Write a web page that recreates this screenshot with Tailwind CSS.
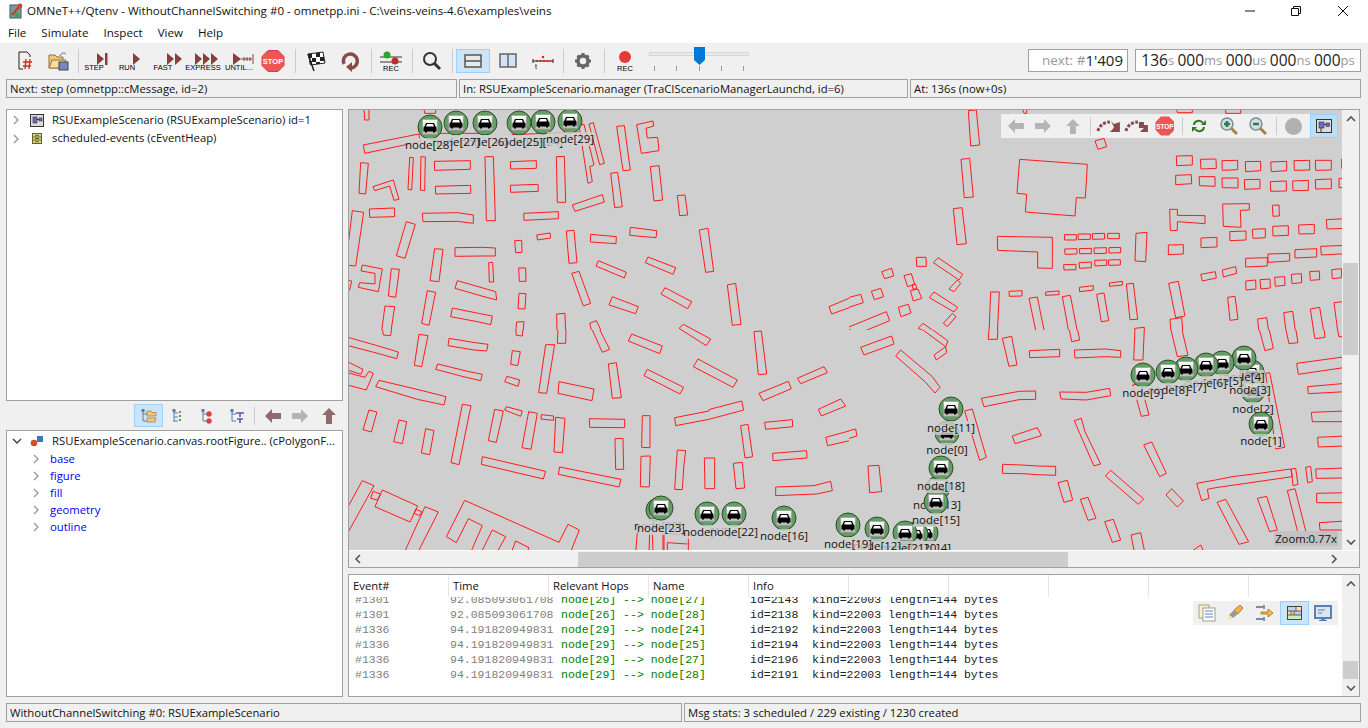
<!DOCTYPE html>
<html lang="en">
<head>
    <meta charset="utf-8" />
    <title>OMNeT++/Qtenv</title>
    <script src="https://cdn.jsdelivr.net/npm/@tailwindcss/browser@4"></script>
</head>
<body class="w-[1368px] h-[728px] overflow-hidden flex flex-col bg-[#f0f0f0] text-[11.3px] text-[#111] font-['Open_Sans',sans-serif]">
    <!-- title bar -->
    <header class="h-[22px] bg-white flex items-center shrink-0">
        <svg class="ml-[9px] w-[16px] h-[16px]" viewBox="0 0 16 16"><rect x="1" y="2" width="11" height="13" fill="#7a9a9a" stroke="#3f5f5f"/><path d="M3 12 10 4" stroke="#c0392b" stroke-width="2"/><circle cx="11" cy="3" r="2.4" fill="#d9432f"/><circle cx="8" cy="12" r="2.4" fill="#3fa34d"/></svg>
        <span class="ml-[2px] text-[11.6px] whitespace-nowrap">OMNeT++/Qtenv - WithoutChannelSwitching #0 - omnetpp.ini - C:\veins-veins-4.6\examples\veins</span>
        <div class="ml-auto flex items-center">
            <svg class="w-[12px] h-[12px] mr-[34px]" viewBox="0 0 12 12"><path d="M1 6H11" stroke="#111"/></svg>
            <svg class="w-[12px] h-[12px] mr-[35px]" viewBox="0 0 12 12"><path d="M1.5 3.5H8.5V10.5H1.5ZM3.5 3.5V1.5H10.5V8.5H8.5" fill="none" stroke="#111"/></svg>
            <svg class="w-[12px] h-[12px] mr-[19px]" viewBox="0 0 12 12"><path d="M1 1 11 11M11 1 1 11" stroke="#111"/></svg>
        </div>
    </header>
    <nav class="h-[21px] bg-white flex items-center shrink-0 pl-[8px] gap-[15px] text-[11.6px]">
        <span>File</span><span>Simulate</span><span>Inspect</span><span>View</span><span>Help</span>
    </nav>

    <!-- main toolbar -->
    <div class="h-[35px] flex items-center shrink-0 pr-[7px]">
        <svg class="ml-[10px] w-[28px] h-[24px]" viewBox="0 0 28 24"><path d="M9 3H17L20 6V8M9 3V20H13" fill="none" stroke="#222"/><path d="M16 10 15 20M20 10 19 20M13 13H22M13 17H21" stroke="#d22" stroke-width="1.3"/></svg>
        <svg class="ml-[6px] w-[28px] h-[24px]" viewBox="0 0 28 24"><path d="M5 6H11L13 8H19V19H5Z" fill="#efc77a" stroke="#8c7440"/><path d="M5 19 8 11H22L19 19Z" fill="#f7dda0" stroke="#8c7440"/><rect x="15" y="13" width="9" height="8" fill="#7b86c4" stroke="#444"/><path d="M16 7C17 4 20 3 22 5" fill="none" stroke="#666"/></svg>
        <div class="ml-[6px] w-px h-[24px] bg-[#ccc]"></div>

        <svg class="ml-px w-[28px] h-[24px] overflow-visible" viewBox="0 0 28 24"><path d="M17 4 24 10 17 16Z" fill="#8a3f3f"/><rect x="25" y="4" width="2.5" height="12" fill="#8a3f3f"/><text x="14" y="21" text-anchor="middle" font-size="7.5" font-family="Liberation Sans">STEP</text></svg>
        <svg class="ml-[5px] w-[28px] h-[24px] overflow-visible" viewBox="0 0 28 24"><path d="M20 4 27 10 20 16Z" fill="#8a3f3f"/><text x="14" y="21" text-anchor="middle" font-size="7.5" font-family="Liberation Sans">RUN</text></svg>
        <svg class="ml-[8px] w-[28px] h-[24px] overflow-visible" viewBox="0 0 28 24"><path d="M18 4 25 10 18 16ZM26 4 33 10 26 16Z" fill="#8a3f3f"/><text x="14" y="21" text-anchor="middle" font-size="7.5" font-family="Liberation Sans">FAST</text></svg>
        <svg class="ml-[14px] w-[28px] h-[24px] overflow-visible" viewBox="0 0 28 24"><path d="M4 4 11 10 4 16ZM12 4 19 10 12 16ZM20 4 27 10 20 16Z" fill="#8a3f3f"/><text x="12" y="21" text-anchor="middle" font-size="7.5" font-family="Liberation Sans">EXPRESS</text></svg>
        <svg class="ml-[5px] w-[28px] h-[24px] overflow-visible" viewBox="0 0 28 24"><path d="M9 4 17 10 9 16Z" fill="#8a3f3f"/><path d="M17 10H28M20 8V12M23 8V12M26 8V12M29 5V15" stroke="#8a3f3f"/><text x="15" y="21" text-anchor="middle" font-size="7.5" font-family="Liberation Sans">UNTIL...</text></svg>
        <svg class="ml-[7px] w-[28px] h-[24px]" viewBox="0 0 28 24"><path d="M9 1.5H19L25 7.5V16.5L19 22.5H9L3 16.5V7.5Z" fill="#ee5555" stroke="#d84040"/><text x="14" y="15" text-anchor="middle" font-size="7.5" font-weight="700" fill="#fff" font-family="Liberation Sans">STOP</text></svg>
        <div class="ml-[8px] w-px h-[24px] bg-[#ccc]"></div>

        <svg class="ml-[6px] w-[28px] h-[24px]" viewBox="0 0 28 24"><path d="M6 5 21 3 23 14 9 16Z" fill="#fff" stroke="#222"/><path d="M6 5H10V9H7ZM14 4H18V8H14ZM10 9H14V13H10ZM18 8H22V12H18ZM7 12H10V16H8ZM14 13H18V15H14Z" fill="#222"/><path d="M6 5 12 22" stroke="#222" stroke-width="1.5"/></svg>
        <svg class="ml-[6px] w-[28px] h-[24px]" viewBox="0 0 28 24"><path d="M8 15A7 7 0 1 1 15 19" fill="none" stroke="#8a4a4a" stroke-width="3.5"/><path d="M16 13V23L10 18Z" fill="#8a4a4a"/></svg>
        <div class="ml-[7px] w-px h-[24px] bg-[#ccc]"></div>

        <svg class="ml-[5px] w-[28px] h-[24px]" viewBox="0 0 28 24"><path d="M3 8H25M3 13H25" stroke="#333"/><circle cx="10" cy="6" r="3.5" fill="#2aa52a"/><circle cx="18" cy="12" r="3.5" fill="#c02a2a"/><text x="14" y="22" text-anchor="middle" font-size="7.5" font-family="Liberation Sans">REC</text></svg>
        <div class="ml-[7px] w-px h-[24px] bg-[#ccc]"></div>

        <svg class="ml-[5px] w-[28px] h-[24px]" viewBox="0 0 28 24"><circle cx="12" cy="10" r="6" fill="none" stroke="#333" stroke-width="2"/><path d="M16.5 14.5 22 20" stroke="#333" stroke-width="3"/></svg>
        <div class="ml-[6px] w-px h-[24px] bg-[#ccc]"></div>

        <div class="ml-[3px] w-[34px] h-[24px] flex items-center justify-center bg-[#cce4f7] border border-[#99d1ff]">
            <svg class="w-[18px] h-[14px]" viewBox="0 0 18 14"><rect x="1" y="1" width="16" height="12" fill="#e8e8e8" stroke="#555" stroke-width="1.5"/><path d="M1 7H17" stroke="#555" stroke-width="1.5"/></svg>
        </div>
        <svg class="ml-[4px] w-[28px] h-[24px]" viewBox="0 0 28 24"><rect x="6" y="5" width="16" height="13" fill="#d4e4f4" stroke="#666" stroke-width="1.5"/><path d="M14 5V18" stroke="#666" stroke-width="1.5"/></svg>
        <svg class="ml-[7px] w-[28px] h-[24px]" viewBox="0 0 28 24"><path d="M4 12H24" stroke="#222"/><path d="M7 12H22" stroke="#d22" stroke-width="2" stroke-dasharray="2 1.5"/><circle cx="14" cy="8" r="1.2" fill="#d22"/><path d="M4 10V14M24 10V14" stroke="#222"/><text x="6" y="20" font-size="7" font-family="Liberation Sans">t</text></svg>
        <div class="ml-[6px] w-px h-[24px] bg-[#ccc]"></div>

        <svg class="ml-[5px] w-[28px] h-[24px]" viewBox="0 0 28 24"><circle cx="14" cy="12" r="5" fill="none" stroke="#666" stroke-width="3.5"/><path d="M14 4V7M14 17V20M6 12H9M19 12H22M8.5 6.5 10.5 8.5M17.5 15.5 19.5 17.5M19.5 6.5 17.5 8.5M10.5 15.5 8.5 17.5" stroke="#666" stroke-width="3"/></svg>
        <div class="ml-[7px] w-px h-[24px] bg-[#ccc]"></div>

        <svg class="ml-[6px] w-[28px] h-[24px]" viewBox="0 0 28 24"><circle cx="14" cy="8" r="6" fill="#e5393a"/><text x="14" y="22" text-anchor="middle" font-size="7.5" font-family="Liberation Sans">REC</text></svg>

        <!-- speed slider -->
        <div class="relative ml-[10px] w-[100px] h-[30px]">
            <div class="absolute left-0 right-0 top-[6px] h-[4px] bg-[#e7eaea] border border-[#d6d6d6]"></div>
            <svg class="absolute left-[44px] top-0 w-[13px] h-[20px]" viewBox="0 0 13 20"><path d="M1 1H12V14L6.5 19 1 14Z" fill="#0078d7"/></svg>
            <div class="absolute left-0 right-0 top-[20px] px-[5px] flex justify-between">
                <div class="w-px h-[5px] bg-[#999]"></div><div class="w-px h-[5px] bg-[#999]"></div><div class="w-px h-[5px] bg-[#999]"></div><div class="w-px h-[5px] bg-[#999]"></div><div class="w-px h-[5px] bg-[#999]"></div>
            </div>
        </div>

        <div class="ml-auto w-[100px] h-[23px] bg-white border border-[#a0a0a0] flex items-center justify-end pr-[4px] text-[13.5px] text-[#999] leading-none whitespace-pre">next: #<span class="text-[#222] text-[15px]">1'409</span></div>
        <div class="ml-[7px] w-[226px] h-[23px] bg-white border border-[#a0a0a0] flex items-center justify-center text-[13px] text-[#999] leading-none whitespace-pre"><span class="text-[#222] text-[15.5px]">136</span>s <span class="text-[#222] text-[15.5px]">000</span>ms <span class="text-[#222] text-[15.5px]">000</span>us <span class="text-[#222] text-[15.5px]">000</span>ns <span class="text-[#222] text-[15.5px]">000</span>ps</div>
    </div>

    <!-- status line -->
    <div class="flex gap-[2px] px-[6px] mt-px h-[19px] shrink-0 leading-none">
        <div class="w-[451px] border border-[#a0a0a0] flex items-center pl-[3px]">Next: step (omnetpp::cMessage, id=2)</div>
        <div class="w-[449px] border border-[#a0a0a0] flex items-center pl-[3px]">In: RSUExampleScenario.manager (TraCIScenarioManagerLaunchd, id=6)</div>
        <div class="flex-1 mr-px border border-[#a0a0a0] flex items-center pl-[3px]">At: 136s (now+0s)</div>
    </div>

    <main class="flex mt-[11px] pl-[6px] h-[588px] shrink-0">
        <!-- left column -->
        <aside class="w-[337px] flex flex-col">
            <div class="h-[292px] bg-white border border-[#a0a0a0] pl-[5px] pt-px">
                <div class="flex items-center h-[18px]">
                    <svg class="w-[8px] h-[10px]" viewBox="0 0 8 10"><path d="M2 1 6 5 2 9" fill="none" stroke="#999" stroke-width="1.4"/></svg>
                    <svg class="ml-[10px] w-[14px] h-[13px]" viewBox="0 0 14 13"><rect x=".5" y=".5" width="13" height="12" fill="#dcdcdc" stroke="#333"/><rect x="3" y="3" width="4" height="6" fill="#6a6ac4" stroke="#333" stroke-width=".6"/><rect x="9" y="4" width="3" height="3" fill="#6a6ac4" stroke="#333" stroke-width=".6"/><path d="M7 5.5H9" stroke="#333"/></svg>
                    <span class="ml-[8px]">RSUExampleScenario (RSUExampleScenario) id=1</span>
                </div>
                <div class="flex items-center h-[19px]">
                    <svg class="w-[8px] h-[10px]" viewBox="0 0 8 10"><path d="M2 1 6 5 2 9" fill="none" stroke="#999" stroke-width="1.4"/></svg>
                    <svg class="ml-[10px] w-[14px] h-[13px]" viewBox="0 0 14 13"><rect x="2.5" y="1.5" width="9" height="10" fill="#d6d68c" stroke="#66661e"/><path d="M2.500 5H11.500M2.500 8H11.500M5 3.300H9M5 6.500H9M5 9.800H9" stroke="#66661e"/></svg>
                    <span class="ml-[8px]">scheduled-events (cEventHeap)</span>
                </div>
            </div>

            <div class="h-[29px] flex items-center pl-[128px]">
                <div class="w-[29px] h-[23px] bg-[#cce4f7] border border-[#99d1ff] flex items-center justify-center">
                    <svg class="w-[18px] h-[16px]" viewBox="0 0 18 16"><path d="M3 3V13H7M3 6H7" fill="none" stroke="#5a7aa8"/><rect x="1.500" y="1" width="3" height="3" fill="#5a7aa8"/><path d="M7 3H11L12 4.500H16V8H7ZM7 10H16L15 14H7Z" fill="#f2c879" stroke="#a07a30" stroke-width=".7"/></svg>
                </div>
                <svg class="ml-[4px] w-[22px] h-[16px]" viewBox="0 0 22 16"><path d="M7 3V14M7 5H11M7 9H11M7 13H11" fill="none" stroke="#5a7aa8"/><rect x="5.500" y="1" width="3" height="3" fill="#5a7aa8"/><path d="M12 4H15M12 8H15M12 12H15" stroke="#5aa05a" stroke-width="2" stroke-dasharray="2 1"/></svg>
                <svg class="ml-[7px] w-[22px] h-[16px]" viewBox="0 0 22 16"><path d="M7 3V13H11M7 6H11" fill="none" stroke="#5a7aa8"/><rect x="5.500" y="1" width="3" height="3" fill="#5a7aa8"/><circle cx="13" cy="6" r="2.700" fill="#d94040"/><circle cx="13" cy="13" r="2.700" fill="#d94040"/></svg>
                <svg class="ml-[8px] w-[22px] h-[16px]" viewBox="0 0 22 16"><path d="M6 3V13H10M6 6H10" fill="none" stroke="#5a7aa8"/><rect x="4.500" y="1" width="3" height="3" fill="#5a7aa8"/><path d="M10 5H18M14 5V9M11 11H17M14 11V15" stroke="#5a5aa8" stroke-width="1.600"/></svg>
                <div class="ml-[6px] w-px h-[18px] bg-[#ccc]"></div>
                <svg class="ml-[10px] w-[16px] h-[16px]" viewBox="0 0 16 16"><path d="M7 1 0 8 7 15V11H16V5H7Z" fill="#8f6a6a"/></svg>
                <svg class="ml-[11px] w-[16px] h-[16px]" viewBox="0 0 16 16"><path d="M9 1 16 8 9 15V11H0V5H9Z" fill="#b4b4b4"/></svg>
                <svg class="ml-[13px] w-[16px] h-[16px]" viewBox="0 0 16 16"><path d="M1 7 8 0 15 7H11V16H5V7Z" fill="#8f6a6a"/></svg>
            </div>

            <div class="h-[267px] bg-white border border-[#a0a0a0] pl-[5px] pt-px leading-none">
                <div class="flex items-center h-[18px] whitespace-nowrap">
                    <svg class="w-[10px] h-[8px]" viewBox="0 0 10 8"><path d="M1 2 5 6 9 2" fill="none" stroke="#444" stroke-width="1.500"/></svg>
                    <svg class="ml-[8px] w-[14px] h-[13px]" viewBox="0 0 14 13"><circle cx="4" cy="8" r="3.300" fill="#d05030"/><rect x="7" y="1" width="6" height="6" fill="#3a78b8"/></svg>
                    <span class="ml-[8px]">RSUExampleScenario.canvas.rootFigure.. (cPolygonF...</span>
                </div>
                <div class="flex items-center h-[17px] pl-[20px] text-[#0000ff]"><svg class="w-[8px] h-[10px]" viewBox="0 0 8 10"><path d="M2 1 6 5 2 9" fill="none" stroke="#999" stroke-width="1.400"/></svg><span class="ml-[10px]">base</span></div>
                <div class="flex items-center h-[17px] pl-[20px] text-[#0000ff]"><svg class="w-[8px] h-[10px]" viewBox="0 0 8 10"><path d="M2 1 6 5 2 9" fill="none" stroke="#999" stroke-width="1.400"/></svg><span class="ml-[10px]">figure</span></div>
                <div class="flex items-center h-[17px] pl-[20px] text-[#0000ff]"><svg class="w-[8px] h-[10px]" viewBox="0 0 8 10"><path d="M2 1 6 5 2 9" fill="none" stroke="#999" stroke-width="1.400"/></svg><span class="ml-[10px]">fill</span></div>
                <div class="flex items-center h-[17px] pl-[20px] text-[#0000ff]"><svg class="w-[8px] h-[10px]" viewBox="0 0 8 10"><path d="M2 1 6 5 2 9" fill="none" stroke="#999" stroke-width="1.400"/></svg><span class="ml-[10px]">geometry</span></div>
                <div class="flex items-center h-[17px] pl-[20px] text-[#0000ff]"><svg class="w-[8px] h-[10px]" viewBox="0 0 8 10"><path d="M2 1 6 5 2 9" fill="none" stroke="#999" stroke-width="1.400"/></svg><span class="ml-[10px]">outline</span></div>
            </div>
        </aside>

        <!-- right column -->
        <section class="ml-[5px] w-[1012px] flex flex-col">
            <div class="h-[459px] border border-[#a0a0a0] flex flex-col bg-[#f0f0f0]">
                <div class="flex h-[440px]">
                    <div class="relative w-[993px] h-[440px] overflow-hidden bg-[#cfcfcf]">
                        <svg id="map" class="absolute inset-0" width="993" height="440" viewBox="0 0 993 440">
                            <defs>
                                <linearGradient id="tile" x1="0" y1="0" x2="0" y2="1"><stop offset="0" stop-color="#ffffff"/><stop offset="1" stop-color="#b8b8b8"/></linearGradient>
                                <clipPath id="cell"><rect width="1500" height="660"/></clipPath>
                            </defs>
                            <g fill="none" stroke="#ff1a1a" stroke-width="3">
                                <g transform="scale(.33333)" clip-path="url(#cell)">
                                    <polygon points="45,-5 60,-5 60,30 47,30"/><polygon points="225,-5 260,-5 260,10 227,10"/><polygon points="43,105 210,72 214,95 47,130"/><polygon points="35,158 58,160 50,252 30,250"/><polygon points="182,142 193,143 188,240 177,238"/><polygon points="216,140 229,141 227,242 214,240"/><polygon points="256,154 364,152 364,178 257,181"/><polygon points="408,140 433,140 436,232 439,332 412,332 410,232"/><polygon points="484,155 562,152 562,175 485,177"/><polygon points="622,140 646,139 650,277 625,277"/><polygon points="72,230 133,210 150,268 135,271 122,228 77,242"/><polygon points="259,229 365,226 365,250 260,252"/><polygon points="484,226 567,223 568,244 485,247"/><polygon points="670,285 760,254 766,276 678,304"/><polygon points="785,190 806,187 820,290 797,293"/><polygon points="803,49 826,47 844,180 822,182"/><polygon points="863,44 912,33 914,48 891,55 895,84 926,82 930,122 877,130"/><polygon points="904,170 930,167 941,270 915,273"/><polygon points="985,257 1008,255 1016,315 992,317"/><polygon points="690,45 705,43 735,165 722,170 730,215 717,220"/><polygon points="720,42 733,38 766,160 752,164"/><polygon points="10,302 44,307 20,468 -10,465"/><polygon points="61,297 136,294 137,320 62,322"/><polygon points="220,310 325,308 373,315 373,340 325,334 222,335"/><polygon points="524,310 628,305 628,326 525,331"/><polygon points="172,335 199,343 168,445 142,437"/><polygon points="563,375 603,369 605,384 566,390"/><polygon points="497,392 518,391 519,427 500,428"/><polygon points="652,363 675,361 684,458 660,460"/><polygon points="725,373 802,380 801,401 724,396"/><polygon points="844,352 924,362 921,383 842,376"/><polygon points="1051,360 1077,355 1094,484 1070,487"/><polygon points="257,416 282,418 270,515 243,512"/><polygon points="318,413 400,412 439,414 439,438 400,438 318,439"/><polygon points="419,458 431,457 434,516 421,516"/><polygon points="509,474 530,474 531,514 511,514"/><polygon points="741,468 748,452 832,487 826,504"/><polygon points="889,458 897,441 980,473 972,493"/><polygon points="668,490 690,484 725,580 703,588"/><polygon points="40,465 100,477 88,545 28,532 32,518 78,522 78,490 36,483"/><polygon points="-5,510 8,513 2,540 -5,538"/><polygon points="127,476 151,478 140,562 118,558"/><polygon points="325,512 440,545 443,570 405,560 318,535"/><polygon points="235,542 260,547 240,646 218,640"/><polygon points="510,550 531,551 528,597 507,596"/><polygon points="780,585 790,560 868,590 860,611"/><polygon points="936,552 948,533 1028,575 1016,596"/><polygon points="1135,525 1160,520 1176,643 1150,646"/><polygon points="1440,590 1500,565 1510,590 1448,612"/><polygon points="108,588 137,590 125,670 97,670"/><polygon points="305,620 310,594 388,610 430,618 425,644 385,635"/><polygon points="623,612 648,610 650,670 624,670"/><polygon points="722,640 742,632 760,670 730,670"/><polygon points="503,636 525,635 522,670 500,670"/><polygon points="990,655 1003,643 1085,687 1072,707"/><polyline points="215,70 420,70"/><polyline points="488,74 690,66"/>
                                </g>
                                <g transform="translate(0,220) scale(.33333)" clip-path="url(#cell)">
                                    <polygon points="100,-5 128,-5 125,17 103,15"/><polygon points="-10,20 88,48 148,66 143,86 78,68 -10,45"/><polygon points="210,13 237,17 218,110 196,106"/><polygon points="300,25 378,38 417,43 413,63 375,60 297,47"/><polygon points="490,62 514,65 506,107 485,103"/><polygon points="500,-5 522,-5 520,18 502,16"/><polygon points="627,-5 651,-5 650,40 625,40"/><polygon points="728,-5 750,-5 782,58 760,67"/><polygon points="838,33 848,12 940,48 932,71"/><polygon points="990,-5 1003,-17 1085,27 1072,47"/><polygon points="1215,5 1237,3 1253,132 1228,134"/><polygon points="590,44 617,44 593,190 569,188"/><polygon points="260,118 266,102 360,125 400,133 395,152 355,143"/><polygon points="467,155 474,139 512,150 507,169"/><polygon points="-5,95 42,118 36,133 -5,120"/><polygon points="-5,128 48,142 60,124 73,130 52,180 -5,165"/><polygon points="778,102 802,98 817,203 790,205"/><polygon points="630,155 735,177 729,212 627,190"/><polygon points="885,137 895,118 1004,172 993,192"/><polygon points="1033,110 1047,87 1165,150 1152,172"/><polygon points="1345,145 1425,110 1435,128 1355,161"/><polygon points="1230,190 1318,154 1327,176 1242,212"/><polygon points="80,170 90,151 220,182 291,200 285,225 205,208"/><polygon points="1408,238 1475,207 1490,228 1417,258"/><polygon points="340,223 366,227 330,404 306,398"/><polygon points="437,238 463,243 442,337 418,332"/><polygon points="467,240 472,230 520,243 515,259"/><polygon points="539,245 565,250 546,358 519,353"/><polygon points="577,254 614,258 613,271 576,267"/><polygon points="620,262 648,265 640,368 615,366"/><polygon points="60,240 84,246 67,306 42,299"/><polygon points="150,270 173,275 160,341 134,335"/><polygon points="230,296 255,302 242,374 217,369"/><polygon points="721,266 827,268 827,293 722,292"/><polygon points="880,257 903,257 903,353 878,352"/><polygon points="977,263 1080,243 1082,238 1178,213 1184,240 1080,268 980,287"/><polygon points="1247,277 1330,269 1331,290 1250,298"/><polygon points="1175,287 1197,283 1211,380 1188,384"/><polygon points="1430,322 1500,303 1510,330 1436,347"/><polygon points="798,326 822,325 824,418 800,418"/><polygon points="876,379 904,378 901,471 874,470"/><polygon points="985,360 1010,362 1005,402 1000,479 977,478 982,402"/><polygon points="1066,384 1097,384 1097,476 1068,476"/><polygon points="1153,400 1180,397 1187,474 1161,476"/><polygon points="1271,370 1373,362 1374,384 1272,392"/><polygon points="1280,471 1395,467 1445,454 1450,482 1403,492 1280,497"/><polygon points="400,380 590,424 583,447 397,403"/><polygon points="632,411 816,448 810,471 628,433"/><polygon points="40,452 75,467 -10,620 -10,543"/><polygon points="65,505 72,484 95,492 85,510"/><polygon points="100,480 206,528 183,576 78,530"/><polygon points="195,550 200,538 218,545 212,557"/><polygon points="228,530 268,546 205,670 165,670"/><polyline points="366,665 400,587 358,566 322,638 292,620 347,511 630,637 657,583 691,600 665,665"/><polyline points="398,665 430,600 470,620 445,665"/><polyline points="488,665 500,633 540,653 535,665"/><polygon points="865,605 902,607 900,670 860,670"/><polygon points="910,605 942,606 942,670 912,670"/><polygon points="945,610 1018,615 1018,670 945,670"/><polyline points="955,665 955,638 1015,642"/>
                                </g>
                                <g transform="translate(500,0) scale(.33333)" clip-path="url(#cell)">
                                    <polygon points="358,2 382,0 392,105 365,108"/><polygon points="520,-5 533,-5 533,10 525,10"/><polygon points="983,-5 1030,-5 1030,8 985,8"/><polygon points="1130,-5 1175,-5 1175,10 1130,10"/><polygon points="738,93 765,85 773,110 747,118"/><polygon points="336,148 362,145 373,261 346,263"/><polygon points="512,148 715,163 709,264 682,263 678,318 529,306 533,253 504,250"/><polygon points="982,138 1030,137 1030,165 983,167"/><polygon points="1054,148 1101,147 1102,175 1056,177"/><polygon points="1119,152 1166,151 1166,179 1120,181"/><polygon points="1189,155 1235,154 1235,182 1190,185"/><polygon points="1265,156 1313,154 1313,182 1267,185"/><polygon points="1335,152 1382,151 1382,180 1336,181"/><polygon points="1399,151 1447,151 1447,180 1400,181"/><polygon points="980,196 1027,194 1028,221 980,224"/><polygon points="1050,200 1098,200 1098,229 1052,227"/><polygon points="1119,204 1167,204 1167,234 1120,233"/><polygon points="1186,209 1233,208 1233,236 1187,238"/><polygon points="1264,215 1312,213 1312,243 1265,244"/><polygon points="1331,213 1378,211 1378,241 1332,242"/><polygon points="1399,209 1447,207 1447,236 1400,237"/><polygon points="1470,205 1490,205 1490,233 1470,233"/><polygon points="1478,147 1490,147 1490,175 1478,175"/><polygon points="313,296 339,293 352,401 324,404"/><polygon points="962,298 985,298 985,316 1068,317 1068,341 985,335 985,361 964,362"/><polygon points="1121,282 1201,281 1201,300 1174,301 1176,352 1123,349"/><polygon points="1270,286 1290,285 1291,318 1272,319"/><polygon points="445,379 610,382 610,475 566,474 566,426 446,421"/><polygon points="646,374 682,374 682,390 647,390"/><polygon points="687,372 724,372 724,388 688,389"/><polygon points="730,371 767,370 767,387 731,388"/><polygon points="776,370 811,370 811,386 776,386"/><polygon points="647,417 684,416 684,432 648,433"/><polygon points="691,416 727,415 727,431 692,431"/><polygon points="735,414 772,413 772,430 736,431"/><polygon points="780,413 815,412 815,428 780,429"/><polygon points="644,464 681,463 681,479 645,480"/><polygon points="690,458 727,456 727,473 692,475"/><polygon points="737,451 773,450 773,466 738,468"/><polygon points="778,450 814,449 814,465 779,466"/><polygon points="861,370 894,367 890,455 858,453"/><polygon points="1432,329 1490,326 1490,355 1434,357"/><polygon points="1349,345 1396,343 1396,371 1350,372"/><polygon points="1271,349 1318,347 1318,376 1272,378"/><polygon points="1210,358 1249,356 1249,383 1212,385"/><polygon points="1142,365 1191,363 1191,390 1143,392"/><polygon points="1056,384 1104,382 1104,411 1056,413"/><polygon points="958,405 1003,404 1003,432 958,434"/><polygon points="1415,409 1490,406 1490,431 1417,435"/><polygon points="1338,419 1403,416 1403,441 1338,444"/><polygon points="1257,432 1322,430 1322,453 1257,457"/><polygon points="1190,445 1255,443 1255,468 1190,471"/><polygon points="1120,480 1160,470 1163,490 1123,501"/><polygon points="1055,493 1099,485 1102,504 1060,513"/><polygon points="1190,513 1220,510 1221,537 1191,540"/><polygon points="1233,509 1263,507 1264,534 1235,537"/><polygon points="1277,502 1307,500 1308,526 1279,529"/><polygon points="1327,493 1357,491 1358,518 1329,521"/><polygon points="1382,485 1411,483 1412,509 1384,511"/><polygon points="1448,479 1477,476 1478,503 1450,506"/><polygon points="202,442 231,442 232,469 203,469"/><polygon points="253,458 267,443 341,493 330,510"/><polygon points="300,537 325,510 335,520 315,545"/><polygon points="98,485 128,475 134,498 107,506"/><polygon points="165,497 187,491 197,523 176,530"/><polygon points="184,542 207,537 218,565 193,573"/><polygon points="190,524 200,522 203,535 192,538"/><polygon points="67,544 95,535 104,560 76,569"/><polygon points="-10,565 35,553 43,578 -10,595"/><polygon points="148,592 178,583 186,609 156,620"/><polygon points="-10,655 112,605 122,632 30,670"/><polygon points="241,563 255,546 326,592 315,606"/><polygon points="283,640 310,610 321,620 295,650"/><polygon points="208,655 222,640 250,660 240,670"/><polygon points="425,546 451,546 445,670 420,670"/><polygon points="480,544 519,542 519,558 481,559"/><polygon points="590,546 630,543 630,554 590,556"/><polygon points="691,532 733,527 733,540 692,545"/><polygon points="781,519 820,514 820,525 782,529"/><polygon points="540,565 565,561 586,665 562,670"/><polygon points="640,560 664,556 686,670 660,670"/><polygon points="743,553 765,549 779,632 757,635"/><polygon points="832,522 853,520 866,628 843,629"/><polygon points="959,520 988,514 1008,618 980,623"/><polygon points="963,628 998,623 1002,670 966,670"/><polygon points="1136,562 1158,559 1167,628 1143,631"/><polygon points="1226,627 1253,623 1260,670 1230,670"/><polygon points="1304,608 1331,604 1340,670 1312,670"/><polygon points="1384,597 1412,592 1425,670 1395,670"/><polygon points="1455,578 1490,574 1490,670 1467,670"/><polygon points="857,655 886,652 886,670 857,670"/>
                                </g>
                                <g transform="translate(500,220) scale(.33333)" clip-path="url(#cell)">
                                    <polygon points="420,-5 447,-5 445,28 418,28"/><polygon points="460,25 488,19 504,105 480,109"/><polygon points="660,-5 685,-5 692,30 668,35"/><polygon points="858,-5 886,-5 882,90 854,90"/><polygon points="965,-5 998,-5 1017,76 985,80"/><polygon points="1230,-5 1260,-5 1273,55 1248,62"/><polygon points="1310,-5 1340,-5 1347,38 1320,41"/><polygon points="1392,-5 1425,-5 1428,22 1398,26"/><polygon points="1465,-5 1490,-5 1490,20 1470,20"/><polygon points="35,52 128,18 135,42 45,75"/><polygon points="215,-5 245,-5 297,33 290,50"/><polygon points="255,75 290,50 293,68 262,90"/><polygon points="541,62 632,58 632,80 542,83"/><polygon points="676,60 770,57 815,62 815,82 770,80 678,84"/><polygon points="1343,100 1490,80 1490,112 1348,133"/><polygon points="1376,170 1490,160 1490,185 1378,191"/><polygon points="1387,247 1490,243 1490,275 1390,275"/><polygon points="1406,322 1490,318 1490,348 1408,351"/><polygon points="1400,417 1490,414 1490,444 1402,445"/><polygon points="1403,490 1490,488 1490,518 1403,518"/><polygon points="1411,578 1490,573 1490,600 1413,600"/><polygon points="140,78 155,60 250,140 273,172 258,189 228,155"/><polygon points="397,205 510,184 560,183 560,208 510,209 405,230"/><polygon points="632,186 712,187 782,175 785,197 712,210 636,207"/><polygon points="851,165 875,160 900,255 877,259"/><polygon points="1250,130 1262,128 1307,352 1280,357"/><polygon points="347,243 370,237 412,382 392,391"/><polygon points="-10,305 20,297 24,318 -10,328"/><polygon points="490,318 565,293 577,317 498,341"/><polygon points="676,272 697,265 708,305 755,402 735,408 692,310"/><polygon points="884,345 908,336 952,430 932,440"/><polygon points="461,403 518,405 565,408 620,409 620,436 565,434 518,431 460,430"/><polygon points="769,438 785,421 884,507 868,523"/><polygon points="951,495 968,476 1003,513 985,531"/><polygon points="57,408 90,406 98,485 62,488"/><polygon points="627,458 655,451 671,510 645,517"/><polygon points="694,508 717,502 741,565 717,571"/><polygon points="767,575 793,568 815,630 790,637"/><polygon points="846,615 875,608 888,670 857,670"/><polygon points="1043,460 1100,450 1150,440 1230,430 1325,417 1330,440 1100,473 1075,478 1080,505 1058,512"/><polygon points="1327,417 1340,415 1347,463 1332,467"/><polygon points="1370,412 1385,409 1390,455 1376,458"/><polygon points="1104,517 1130,508 1199,635 1170,643"/><polygon points="1225,505 1253,499 1285,600 1262,605"/><polygon points="1315,482 1338,476 1372,610 1348,613"/><polygon points="1020,670 1055,645 1067,670"/>
                                </g>
                            </g>
                            <g id="nodes"></g>
                        </svg>

                        <!-- canvas toolbar -->
                        <div class="absolute left-[652px] top-[4px] w-[337px] h-[24px] bg-[#f0f0f0] flex items-center">
                            <svg class="ml-[7px] w-[16px] h-[16px]" viewBox="0 0 16 16"><path d="M7 1 0 8 7 15V11H16V5H7Z" fill="#b4b4b4"/></svg>
                            <svg class="ml-[11px] w-[16px] h-[16px]" viewBox="0 0 16 16"><path d="M9 1 16 8 9 15V11H0V5H9Z" fill="#b4b4b4"/></svg>
                            <svg class="ml-[14px] w-[16px] h-[16px]" viewBox="0 0 16 16"><path d="M1 8 8 1 15 8H11V16H5V8Z" fill="#b4b4b4"/></svg>
                            <div class="ml-[9px] w-px h-[18px] bg-[#ccc]"></div>
                            <svg class="ml-[5px] w-[26px] h-[16px]" viewBox="0 0 26 16"><path d="M2 13C3 8 8 4 14 4" fill="none" stroke="#8a4a4a" stroke-width="3" stroke-dasharray="3 1.500"/><path d="M15 3 18 6 21 5 24 4V14H14L17 11 18 9Z" fill="#8a4a4a"/></svg>
                            <svg class="ml-[2px] w-[26px] h-[16px]" viewBox="0 0 26 16"><path d="M2 13C3 8 8 4 14 4" fill="none" stroke="#8a4a4a" stroke-width="3" stroke-dasharray="3 1.500"/><path d="M15 4H20V7H24V14H16L20 10H15Z" fill="#8a4a4a"/></svg>
                            <svg class="ml-[5px] w-[20px] h-[20px]" viewBox="0 0 20 20"><path d="M6 .5H14L19.500 6V14L14 19.500H6L.5 14V6Z" fill="#ee5555"/><text x="10" y="13" text-anchor="middle" font-size="6.500" font-weight="700" fill="#fff" font-family="Liberation Sans">STOP</text></svg>
                            <div class="ml-[8px] w-px h-[18px] bg-[#ccc]"></div>
                            <svg class="ml-[8px] w-[16px] h-[16px]" viewBox="0 0 16 16"><path d="M3 7C3 3 9 1 12 5" fill="none" stroke="#2f7a1f" stroke-width="2"/><path d="M10 7H15V2Z" fill="#2f7a1f"/><path d="M13 9C13 13 7 15 4 11" fill="none" stroke="#2f7a1f" stroke-width="2"/><path d="M6 9H1V14Z" fill="#2f7a1f"/></svg>
                            <svg class="ml-[12px] w-[20px] h-[20px]" viewBox="0 0 20 20"><circle cx="8" cy="8" r="6" fill="#cfe0e6" stroke="#7d8d99" stroke-width="1.500"/><path d="M5 8H11M8 5V11" stroke="#2f7a3f" stroke-width="2.500"/><path d="M12.500 12.500 18 18" stroke="#a88050" stroke-width="3"/></svg>
                            <svg class="ml-[9px] w-[20px] h-[20px]" viewBox="0 0 20 20"><circle cx="8" cy="8" r="6" fill="#cfe0e6" stroke="#7d8d99" stroke-width="1.500"/><path d="M5 8H11" stroke="#2f7a3f" stroke-width="2.500"/><path d="M12.500 12.500 18 18" stroke="#a88050" stroke-width="3"/></svg>
                            <div class="ml-[8px] w-px h-[18px] bg-[#ccc]"></div>
                            <div class="ml-[8px] w-[17px] h-[17px] rounded-full bg-[#b0b0b0]"></div>
                            <div class="ml-[8px] w-[28px] h-[24px] bg-[#bddcf5] border border-[#99d1ff] flex items-center justify-center">
                                <svg class="w-[16px] h-[14px]" viewBox="0 0 16 14"><rect x=".5" y=".5" width="15" height="13" fill="#dcdcdc" stroke="#333"/><rect x="3" y="3" width="5" height="6" fill="#6a6ac4" stroke="#333" stroke-width=".6"/><rect x="10" y="4" width="3.500" height="3.500" fill="#6a6ac4" stroke="#333" stroke-width=".6"/><path d="M8 5.500H10M5 9V13" stroke="#333"/></svg>
                            </div>
                        </div>

                        <div class="absolute left-[925px] top-[421px] w-[64px] h-[15px] bg-[#c2c2c2] flex items-center justify-center leading-none text-[#111]">Zoom:0.77x</div>
                    </div>

                    <!-- vertical scrollbar -->
                    <div class="w-[17px] flex flex-col items-center">
                        <div class="h-[17px] flex items-center"><svg class="w-[10px] h-[8px]" viewBox="0 0 10 8"><path d="M1 6 5 2 9 6" fill="none" stroke="#555" stroke-width="1.600"/></svg></div>
                        <div class="mt-[136px] w-[15px] h-[92px] bg-[#cdcdcd]"></div>
                        <div class="mt-auto h-[17px] flex items-center"><svg class="w-[10px] h-[8px]" viewBox="0 0 10 8"><path d="M1 2 5 6 9 2" fill="none" stroke="#555" stroke-width="1.600"/></svg></div>
                    </div>
                </div>
                <!-- horizontal scrollbar -->
                <div class="flex items-center h-[17px] border-t border-white pr-[17px]">
                    <div class="w-[17px] flex justify-center"><svg class="w-[8px] h-[10px]" viewBox="0 0 8 10"><path d="M6 1 2 5 6 9" fill="none" stroke="#555" stroke-width="1.600"/></svg></div>
                    <div class="ml-[212px] w-[490px] h-[15px] bg-[#cdcdcd]"></div>
                    <div class="ml-auto w-[17px] flex justify-center"><svg class="w-[8px] h-[10px]" viewBox="0 0 8 10"><path d="M2 1 6 5 2 9" fill="none" stroke="#555" stroke-width="1.600"/></svg></div>
                </div>
            </div>

            <!-- event log -->
            <div class="mt-[6px] h-[123px] border border-[#a0a0a0] bg-white flex relative overflow-hidden">
                <div class="w-[993px] overflow-hidden">
                    <div class="relative z-10 flex h-[22px] bg-white items-center">
                        <div class="w-[100px] shrink-0 h-full flex items-center pl-[4px] border-r border-[#e5e5e5]">Event#</div>
                        <div class="w-[100px] shrink-0 h-full flex items-center pl-[4px] border-r border-[#e5e5e5]">Time</div>
                        <div class="w-[100px] shrink-0 h-full flex items-center pl-[4px] border-r border-[#e5e5e5]">Relevant Hops</div>
                        <div class="w-[100px] shrink-0 h-full flex items-center pl-[4px] border-r border-[#e5e5e5]">Name</div>
                        <div class="w-[100px] shrink-0 h-full flex items-center pl-[4px] border-r border-[#e5e5e5]">Info</div>
                        <div class="w-[100px] shrink-0 h-full border-r border-[#e5e5e5]"></div>
                        <div class="w-[100px] shrink-0 h-full border-r border-[#e5e5e5]"></div>
                        <div class="w-[100px] shrink-0 h-full border-r border-[#e5e5e5]"></div>
                        <div class="w-[100px] shrink-0 h-full border-r border-[#e5e5e5]"></div>
                    </div>
                    <div id="log" class="-mt-[5px] pl-[6px] font-['Liberation_Mono',monospace] text-[11.5px] leading-[15px]"></div>
                </div>
                <div class="w-[17px] bg-[#f0f0f0] flex flex-col items-center">
                    <div class="h-[17px] flex items-center"><svg class="w-[10px] h-[8px]" viewBox="0 0 10 8"><path d="M1 6 5 2 9 6" fill="none" stroke="#555" stroke-width="1.600"/></svg></div>
                    <div class="mt-[69px] w-[15px] h-[18px] bg-[#cdcdcd]"></div>
                    <div class="mt-auto h-[17px] flex items-center"><svg class="w-[10px] h-[8px]" viewBox="0 0 10 8"><path d="M1 2 5 6 9 2" fill="none" stroke="#555" stroke-width="1.600"/></svg></div>
                </div>

                <!-- log toolbar -->
                <div class="absolute z-20 left-[844px] top-[26px] w-[145px] h-[24px] bg-[#f0f0f0] flex items-center">
                    <svg class="ml-[5px] w-[18px] h-[18px]" viewBox="0 0 18 18"><rect x="1" y="1" width="10" height="13" fill="#f5eed8" stroke="#b0a070"/><rect x="5" y="4" width="12" height="13" fill="#fff" stroke="#a0a080"/><path d="M7 7H15M7 10H15M7 13H15" stroke="#5a80c0"/></svg>
                    <svg class="ml-[10px] w-[18px] h-[18px]" viewBox="0 0 18 18"><path d="M8 6 14 1 17 4 12 10Z" fill="#f0b050" stroke="#c08030"/><path d="M3 11 8 6 12 10 7 14Z" fill="#999"/><path d="M1 17 3 11 7 14Z" fill="#f8e8a8"/></svg>
                    <svg class="ml-[12px] w-[18px] h-[18px]" viewBox="0 0 18 18"><path d="M0 3H7M0 15H7M8 1V5M8 13V17" stroke="#556a8a" stroke-width="1.400"/><path d="M5 8H12V5L17 9 12 13V10H5Z" fill="#f0c040" stroke="#a06a10" stroke-width=".8"/></svg>
                    <div class="ml-[6px] w-[29px] h-[24px] bg-[#cce4f7] border border-[#99d1ff] flex items-center justify-center">
                        <svg class="w-[15px] h-[14px]" viewBox="0 0 15 14"><rect x="1" y="1" width="8" height="4" fill="#bcd4f0"/><rect x="9" y="1" width="5" height="4" fill="#fbe4b0"/><rect x="1" y="5" width="3" height="4" fill="#fbe070"/><rect x="4" y="5" width="3" height="4" fill="#fbe070"/><rect x="7" y="5" width="7" height="4" fill="#c8c4f0"/><rect x="1" y="9" width="13" height="4" fill="#c8eec0"/><path d="M1 5H14M1 9H14M9 1V5M4 5V9M7 5V9" stroke="#444" stroke-width=".8"/><rect x=".5" y=".5" width="14" height="13" fill="none" stroke="#444"/></svg>
                    </div>
                    <svg class="ml-[5px] w-[18px] h-[18px]" viewBox="0 0 18 18"><rect x="1" y="2" width="16" height="12" fill="#dbe6f4" stroke="#5a7fb0" stroke-width="2"/><path d="M4 6H11M4 9H8" stroke="#5a7fb0"/><path d="M7 14H11V16H13V17H5V16H7Z" fill="#5a7fb0"/></svg>
                </div>
            </div>
        </section>
    </main>

    <footer class="flex gap-[2px] px-[6px] mt-[6px] h-[19px] shrink-0 leading-none">
        <div class="w-[676px] border border-[#a0a0a0] flex items-center pl-[3px]">WithoutChannelSwitching #0: RSUExampleScenario</div>
        <div class="flex-1 mr-px border border-[#a0a0a0] flex items-center pl-[3px]">Msg stats: 3 scheduled / 229 existing / 1230 created</div>
    </footer>

    <script>
        // name, icon x, icon y, label x, label baseline (canvas coordinates, back to front)
        const nodes = [
            [24, 194, 12, 190, 36], [25, 170, 13, 170, 36], [29, 221, 11, 221, 33], [26, 136, 13, 135, 36], [27, 107, 13, 107, 36], [28, 81, 17, 80, 39],
            [10, 309, 400, 309, 420], [23, 312, 398, 312, 422], [17, 358, 404, 358, 426], [22, 385, 404, 385, 426], [16, 435, 408, 435, 430],
            [14, 577, 423, 578, 442], [20, 567, 424, 567, 442], [21, 556, 423, 555, 442], [12, 528, 419, 528, 440], [19, 499, 415, 499, 438],
            [0, 598, 323, 598, 344], [11, 602, 299, 602, 322], [13, 589, 378, 588, 399], [15, 587, 392, 587, 414], [18, 592, 358, 592, 380],
            [2, 904, 281, 904, 303], [3, 903, 262, 901, 284], [4, 895, 248, 895, 271], [5, 873, 253, 873, 275], [6, 857, 255, 857, 277],
            [7, 837, 259, 837, 281], [8, 819, 262, 819, 284], [9, 794, 265, 794, 287], [1, 912, 314, 912, 335]
        ];

        document.getElementById('nodes').innerHTML = nodes.map(([id, x, y, lx, ly]) => {
            const w = id < 10 ? 40 : 46;
            return `<g transform="translate(${x},${y})">
                <circle r="12" fill="#62a062" stroke="#2f4a2f"/>
                <rect x="-7.5" y="-7.5" width="15" height="15" fill="url(#tile)" stroke="#8a8a8a" stroke-width=".5"/>
                <path d="M-4-4H4L5.5-.5 6.5.5V4.500H5V5.500H3V4.500H-3V5.500H-5V4.500H-6.500V.5L-5.500-.5Z" fill="#000"/>
                <path d="M-3-3H3L4-.5H-4Z" fill="#fff"/>
            </g>
            <rect x="${lx - w / 2}" y="${ly - 11}" width="${w}" height="14" fill="#cfcfcf" fill-opacity=".8"/>
            <text x="${lx}" y="${ly}" text-anchor="middle" font-size="11.5" fill="#111" font-family="Open Sans">node[${id}]</text>`;
        }).join('');

        const logRows = [
            ['#1301', '92.085093061708', 26, 27, 2143],
            ['#1301', '92.085093061708', 26, 28, 2138],
            ['#1336', '94.191820949831', 29, 24, 2192],
            ['#1336', '94.191820949831', 29, 25, 2194],
            ['#1336', '94.191820949831', 29, 27, 2196],
            ['#1336', '94.191820949831', 29, 28, 2191]
        ];

        document.getElementById('log').innerHTML = logRows.map(([ev, time, from, to, id]) => `
            <div class="grid grid-cols-[95px_111px_189px_1fr] whitespace-pre h-[15px]">
                <span class="text-[#808080]">${ev}</span>
                <span class="text-[#808080]">${time}</span>
                <span class="text-[#008000]">node[${from}] --&gt; node[${to}]</span>
                <span class="text-[#222]">id=${id}  kind=22003 length=144 bytes</span>
            </div>`).join('');
    </script>
</body>
</html>
